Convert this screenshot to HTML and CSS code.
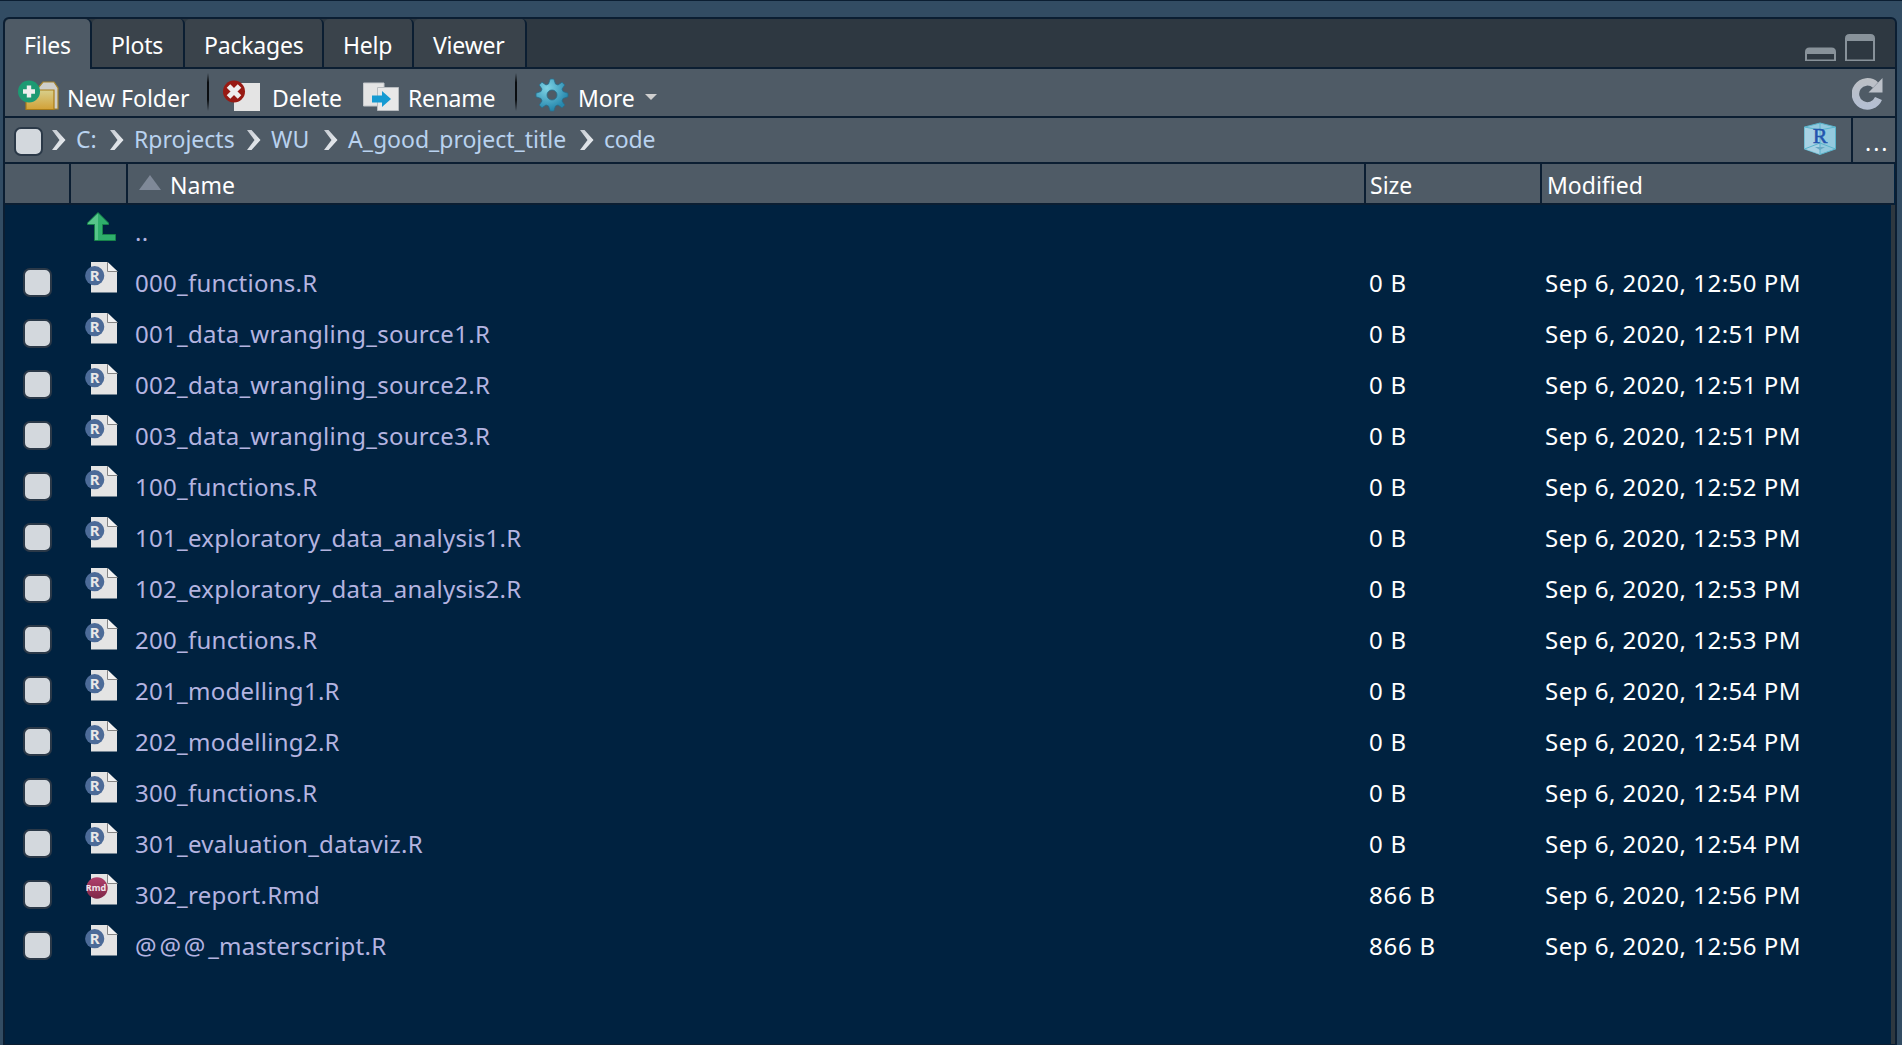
FILE: index.html
```html
<!DOCTYPE html>
<html lang="en">
<head>
<meta charset="utf-8">
<title>Files</title>
<link rel="stylesheet" href="styles.css">
</head>
<body>
<svg class="defs" width="0" height="0">
  <defs>
    <linearGradient id="gold" x1="0" y1="0" x2="0" y2="1"><stop offset="0" stop-color="#d8cf8c"/><stop offset="1" stop-color="#d2a136"/></linearGradient>
    <linearGradient id="chev" x1="0" y1="0" x2="1" y2="1"><stop offset="0" stop-color="#c4c9d0"/><stop offset="1" stop-color="#f0f3f6"/></linearGradient>
    <radialGradient id="teal" gradientUnits="userSpaceOnUse" cx="-5" cy="-7" r="22"><stop offset="0" stop-color="#7fd3e4"/><stop offset="1" stop-color="#2788ae"/></radialGradient>
    <linearGradient id="berry" x1="0" y1="0" x2="0" y2="1"><stop offset="0" stop-color="#b0406c"/><stop offset="1" stop-color="#802848"/></linearGradient>
    <linearGradient id="silver" x1="0" y1="0" x2="0" y2="1"><stop offset="0" stop-color="#bcc0c6"/><stop offset="1" stop-color="#b4bfd2"/></linearGradient>
    <symbol id="sheet" viewBox="0 0 34 32">
      <path d="M6 1H22.5L32 10V31.5H6Z" fill="#e4e4e4"/>
      <path d="M22.5 1V10.500H32.500" fill="#f2f2f2" stroke="#858585" stroke-width="1"/>
    </symbol>
    <symbol id="chevron" viewBox="0 0 14 20"><path d="M0 0H4.500L13.500 10L4.500 20H0L7.500 10Z" fill="url(#chev)"/></symbol>
    <symbol id="rfile" viewBox="0 0 34 32">
      <use href="#sheet" width="34" height="32"/>
      <circle cx="9.700" cy="14.700" r="9.600" fill="#4c6b98"/>
      <text x="9.700" y="20" text-anchor="middle" font-size="15" font-weight="bold" fill="#e8e8e8">R</text>
    </symbol>
    <symbol id="rmdfile" viewBox="0 0 34 32">
      <use href="#sheet" width="34" height="32"/>
      <circle cx="12" cy="15" r="10.700" fill="url(#berry)"/>
      <text x="11" y="18" text-anchor="middle" font-size="9" font-weight="bold" fill="#f0e4ea">Rmd</text>
    </symbol>
  </defs>
</svg>
<div class="pane">
  <nav class="tabs">
    <span class="tab active t-files">Files</span><span class="tab t-plots">Plots</span><span class="tab t-packages">Packages</span><span class="tab t-help">Help</span><span class="tab t-viewer">Viewer</span>
    <svg class="winbtns" width="72" height="30" viewBox="0 0 72 30">
      <path d="M0 27V18Q0 13.500 4.500 13.500H26.500Q31 13.500 31 18V27Z M2 20V25.500H29V20Z" fill="#88929a" fill-rule="evenodd"/>
      <path d="M40 27V4.500Q40 0 44.500 0H65.500Q70 0 70 4.500V27Z M42 7V25.500H68V7Z" fill="#88929a" fill-rule="evenodd"/>
    </svg>
  </nav>
  <div class="toolbar">
    <div class="tool new">
      <svg width="42" height="32" viewBox="0 0 42 32">
        <path d="M20 8L25 2H36L40 8V29H10V12H20Z" fill="#cfcfca" stroke="#a5842c" stroke-width="1.200"/>
        <path d="M8 10H36V29.500H8Z" fill="url(#gold)" stroke="#a87c18" stroke-width="1.200"/>
        <circle cx="11" cy="11.500" r="11" fill="#1d9a73"/>
        <path d="M8.800 5.500H13.200V9.300H17V13.700H13.200V17.500H8.800V13.700H5V9.300H8.800Z" fill="#eee"/>
      </svg><span>New Folder</span>
    </div>
    <i class="sep"></i>
    <div class="tool del">
      <svg width="38" height="32" viewBox="0 0 38 32">
        <path d="M11 3H37V31H11Z" fill="#e4e4e4"/>
        <circle cx="11" cy="11.500" r="11" fill="#981a14"/>
        <path d="M5.500 6L16.500 17M16.500 6L5.500 17" stroke="#eee" stroke-width="5"/>
      </svg><span>Delete</span>
    </div>
    <div class="tool ren">
      <svg width="36" height="30" viewBox="0 0 36 30">
        <path d="M0.500 1H21V24H0.500Z" fill="#e4e4e4" stroke="#c3c7ca"/>
        <path d="M14.500 5.500H35.500V28.500H14.500Z" fill="#e8e8e8" stroke="#b8bcc0"/>
        <path d="M9 13.500H19V9L28 17L19 25V20.500H9Z" fill="#159ad2"/>
      </svg><span>Rename</span>
    </div>
    <i class="sep"></i>
    <div class="tool more">
      <svg width="34" height="34" viewBox="-17 -17 34 34">
        <path fill="url(#teal)" stroke="#276f8d" stroke-width=".8" fill-rule="evenodd" d="M-1.800 -16H1.800L3.500 -11L6 -10L10 -12.800L12.800 -10L10 -6L11 -3.500L16 -1.800V1.800L11 3.500L10 6L12.800 10L10 12.800L6 10L3.500 11L1.800 16H-1.800L-3.500 11L-6 10L-10 12.800L-12.800 10L-10 6L-11 3.500L-16 1.800V-1.800L-11 -3.500L-10 -6L-12.800 -10L-10 -12.800L-6 -10L-3.500 -11Z M5 0A5 5 0 1 0 -5 0A5 5 0 1 0 5 0Z"/>
      </svg><span>More</span>
      <svg class="caret" width="12" height="6" viewBox="0 0 12 6"><path d="M0 0H12L6 6Z" fill="#cfcfcf"/></svg>
    </div>
    <svg class="refresh" width="32" height="32" viewBox="0 0 32 32">
      <path d="M26.500 20.500A12 12 0 1 1 23.500 7" fill="none" stroke="url(#silver)" stroke-width="7.500"/>
      <path d="M30.500 0V14.500H16.500Z" fill="#bcc1c9"/>
    </svg>
  </div>
  <div class="path">
    <i class="check"></i>
    <svg class="chev"><use href="#chevron"/></svg><span class="p1">C:</span>
    <svg class="chev"><use href="#chevron"/></svg><span class="p2">Rprojects</span>
    <svg class="chev"><use href="#chevron"/></svg><span class="p3">WU</span>
    <svg class="chev"><use href="#chevron"/></svg><span class="p4">A_good_project_title</span>
    <svg class="chev"><use href="#chevron"/></svg><span class="p5">code</span>
    <svg class="cube" width="34" height="34" viewBox="0 0 34 34">
      <path d="M17 1L32.500 5V27L17 32.500L1.500 27V5Z" fill="#93c9de" stroke="#59b4cb"/>
      <path d="M1.500 5L17 8V32.500L1.500 27Z" fill="#b5d9e7" opacity=".6"/>
      <path d="M17 1V32M1.500 5L17 8L32.500 5M1.500 27L17 21L32.500 27" fill="none" stroke="#59b4cb"/>
      <text x="17" y="20.500" text-anchor="middle" class="cube-r">R</text>
      <path d="M12 25H22L17 28Z" fill="#69a9c4"/>
    </svg>
    <div class="browse">...</div>
  </div>
  <div class="head">
    <span></span><span></span>
    <span class="h-name"><svg width="22" height="15" viewBox="0 0 22 15"><path d="M11 0L22 15H0Z" fill="#7f8998"/></svg><b>Name</b></span>
    <span class="h-size">Size</span><span class="h-mod">Modified</span>
  </div>
  <div class="list">
    <div class="row up"><svg class="ico" width="34" height="32" viewBox="0 0 34 32">
      <path d="M13 1.500L23.500 12V13.500H17.500V23.500H30.500V29.500H9.500V13.500H2.500V12Z" fill="#2faf6c" stroke="#17824a"/>
      <path d="M13 2.500V29H10V13H3V12Z" fill="#56c58a"/></svg><span class="name">..</span></div>
    <div class="row"><i class="check"></i><svg class="ico"><use href="#rfile"/></svg><span class="name">000_functions.R</span><span class="size">0 B</span><span class="date">Sep 6, 2020, 12:50 PM</span></div>
    <div class="row"><i class="check"></i><svg class="ico"><use href="#rfile"/></svg><span class="name">001_data_wrangling_source1.R</span><span class="size">0 B</span><span class="date">Sep 6, 2020, 12:51 PM</span></div>
    <div class="row"><i class="check"></i><svg class="ico"><use href="#rfile"/></svg><span class="name">002_data_wrangling_source2.R</span><span class="size">0 B</span><span class="date">Sep 6, 2020, 12:51 PM</span></div>
    <div class="row"><i class="check"></i><svg class="ico"><use href="#rfile"/></svg><span class="name">003_data_wrangling_source3.R</span><span class="size">0 B</span><span class="date">Sep 6, 2020, 12:51 PM</span></div>
    <div class="row"><i class="check"></i><svg class="ico"><use href="#rfile"/></svg><span class="name">100_functions.R</span><span class="size">0 B</span><span class="date">Sep 6, 2020, 12:52 PM</span></div>
    <div class="row"><i class="check"></i><svg class="ico"><use href="#rfile"/></svg><span class="name">101_exploratory_data_analysis1.R</span><span class="size">0 B</span><span class="date">Sep 6, 2020, 12:53 PM</span></div>
    <div class="row"><i class="check"></i><svg class="ico"><use href="#rfile"/></svg><span class="name">102_exploratory_data_analysis2.R</span><span class="size">0 B</span><span class="date">Sep 6, 2020, 12:53 PM</span></div>
    <div class="row"><i class="check"></i><svg class="ico"><use href="#rfile"/></svg><span class="name">200_functions.R</span><span class="size">0 B</span><span class="date">Sep 6, 2020, 12:53 PM</span></div>
    <div class="row"><i class="check"></i><svg class="ico"><use href="#rfile"/></svg><span class="name">201_modelling1.R</span><span class="size">0 B</span><span class="date">Sep 6, 2020, 12:54 PM</span></div>
    <div class="row"><i class="check"></i><svg class="ico"><use href="#rfile"/></svg><span class="name">202_modelling2.R</span><span class="size">0 B</span><span class="date">Sep 6, 2020, 12:54 PM</span></div>
    <div class="row"><i class="check"></i><svg class="ico"><use href="#rfile"/></svg><span class="name">300_functions.R</span><span class="size">0 B</span><span class="date">Sep 6, 2020, 12:54 PM</span></div>
    <div class="row"><i class="check"></i><svg class="ico"><use href="#rfile"/></svg><span class="name">301_evaluation_dataviz.R</span><span class="size">0 B</span><span class="date">Sep 6, 2020, 12:54 PM</span></div>
    <div class="row"><i class="check"></i><svg class="ico"><use href="#rmdfile"/></svg><span class="name">302_report.Rmd</span><span class="size">866 B</span><span class="date">Sep 6, 2020, 12:56 PM</span></div>
    <div class="row"><i class="check"></i><svg class="ico"><use href="#rfile"/></svg><span class="name"><span class="at">@@@</span>_masterscript.R</span><span class="size">866 B</span><span class="date">Sep 6, 2020, 12:56 PM</span></div>
  </div>
</div>
</body>
</html>
```
FILE: styles.css
```css
* { box-sizing: border-box; }
body {
  margin: 0;
  height: 1045px;
  overflow: hidden;
  padding: 16px 5px 0 3px;
  background: #324c63;
  border-top: 1px solid #0b1e32;
  font: 23px/32px "Noto Sans", "Open Sans", sans-serif;
  color: #fff;
  white-space: nowrap;
}
.defs { position: absolute; }
svg { display: block; flex: none; }
.pane {
  height: 1028px;
  border: 2px solid #0b1e32;
  border-bottom-width: 1px;
  border-radius: 6px 6px 0 0;
  background: #002240;
  overflow: hidden;
}
.tabs {
  display: flex;
  height: 50px;
  background: #2e3841;
  border-bottom: 2px solid #0b1e32;
  letter-spacing: -.2px;
}
.tab {
  height: 48px;
  padding: 10px 0 0 19px;
  border-right: 2px solid #0b1e32;
  background: #3a434b;
  border-radius: 5px 5px 0 0;
}
.tab.active { height: 50px; background: #4f5b66; border-right: 0; width: 85px; margin-right: 2px; }
.tab.active { box-shadow: 2px 0 0 #0b1e32; }
.t-plots { width: 93px; }
.t-packages { width: 139px; }
.t-help { width: 90px; }
.t-viewer { width: 113px; }
.winbtns { margin: 15px 18px 0 auto; }
.toolbar {
  display: flex;
  height: 49px;
  background: #4f5b66;
  border-bottom: 2px solid #0b1e32;
}
.tool { display: flex; }
.tool span { padding-top: 13px; }
.new { width: 189px; padding-left: 13px; }
.new svg, .del svg { margin-top: 11px; }
.new span { margin-left: 7px; }
.sep {
  width: 2px;
  height: 38px;
  margin: 4px 0 0 14px;
  background: linear-gradient(#4f5b66, #0a0d10 25%, #0a0d10 70%, #4f5b66);
}
.new + .sep { margin-left: 13px; }
.del { width: 140px; margin-left: 14px; }
.del span { margin-left: 11px; }
.ren { width: 138px; letter-spacing: -.3px; }
.ren svg { margin-top: 13px; }
.ren span { margin-left: 9px; }
.more { margin-left: 18px; }
.more svg { margin-top: 9px; }
.more span { margin-left: 9px; width: 67px; }
.more .caret { margin-top: 25px; }
.refresh { margin: 9px 11px 0 auto; }
.path {
  display: flex;
  height: 46px;
  background: #4f5b66;
  border-bottom: 2px solid #0b1e32;
  color: #b9d2ef;
}
.path span { padding-top: 5px; }
.check {
  flex: none;
  width: 29px;
  height: 29px;
  border: 2px solid #2b3948;
  border-radius: 7px;
  background: #d3d8dd;
}
.path .check { margin: 9px 10px 0 9px; }
.chev { width: 14px; height: 20px; margin: 12px 10px 0 -1px; }
.p1 { width: 35px; }
.p2 { width: 114px; }
.p3 { width: 54px; }
.p4 { width: 233px; }
.p5 { letter-spacing: -.2px; }
.cube { margin: 4px 14px 0 auto; }
.browse {
  width: 44px;
  padding: 8px 0 0 12px;
  border-left: 2px solid #0b1e32;
  color: #fff;
  letter-spacing: 2px;
}
.head {
  display: grid;
  grid-template-columns: 66px 57px 1238px 176px 1fr;
  height: 41px;
  margin-right: 1px;
  background: #4f5b66;
  border-bottom: 2px solid #0b1e32;
}
.head > span { border-right: 2px solid #0b1e32; padding: 5px 0 0 4px; }
.head > span:last-child { border-right: 0; padding-left: 5px; }
.head b { font-weight: 400; }
.head .h-name { display: flex; padding-left: 11px; }
.h-name svg { margin: 6px 9px 0 0; }
.list {
  height: 840px;
  padding-top: 1px;
  border-right: 4px solid #2e3840;
  font-size: 24px;
}
.row {
  display: grid;
  grid-template-columns: 62px 50px 1233px 176px 1fr;
  height: 51px;
  padding: 10px 0 0 18px;
}
.row .check { margin-top: 1px; }
.row .ico { width: 34px; height: 32px; margin-top: -6px; }
.up .ico { grid-column: 2; margin-top: -5px; }
.row .name { color: #b4b4e0; letter-spacing: .28px; }
.row .at { letter-spacing: 2.8px; }
.row .size { letter-spacing: .8px; padding-left: 1px; }
.row .date { letter-spacing: .5px; padding-left: 1px; }
.cube-r { font: 22px "Liberation Serif", serif; fill: #2455ae; stroke: #2455ae; stroke-width: .5px; }
```
